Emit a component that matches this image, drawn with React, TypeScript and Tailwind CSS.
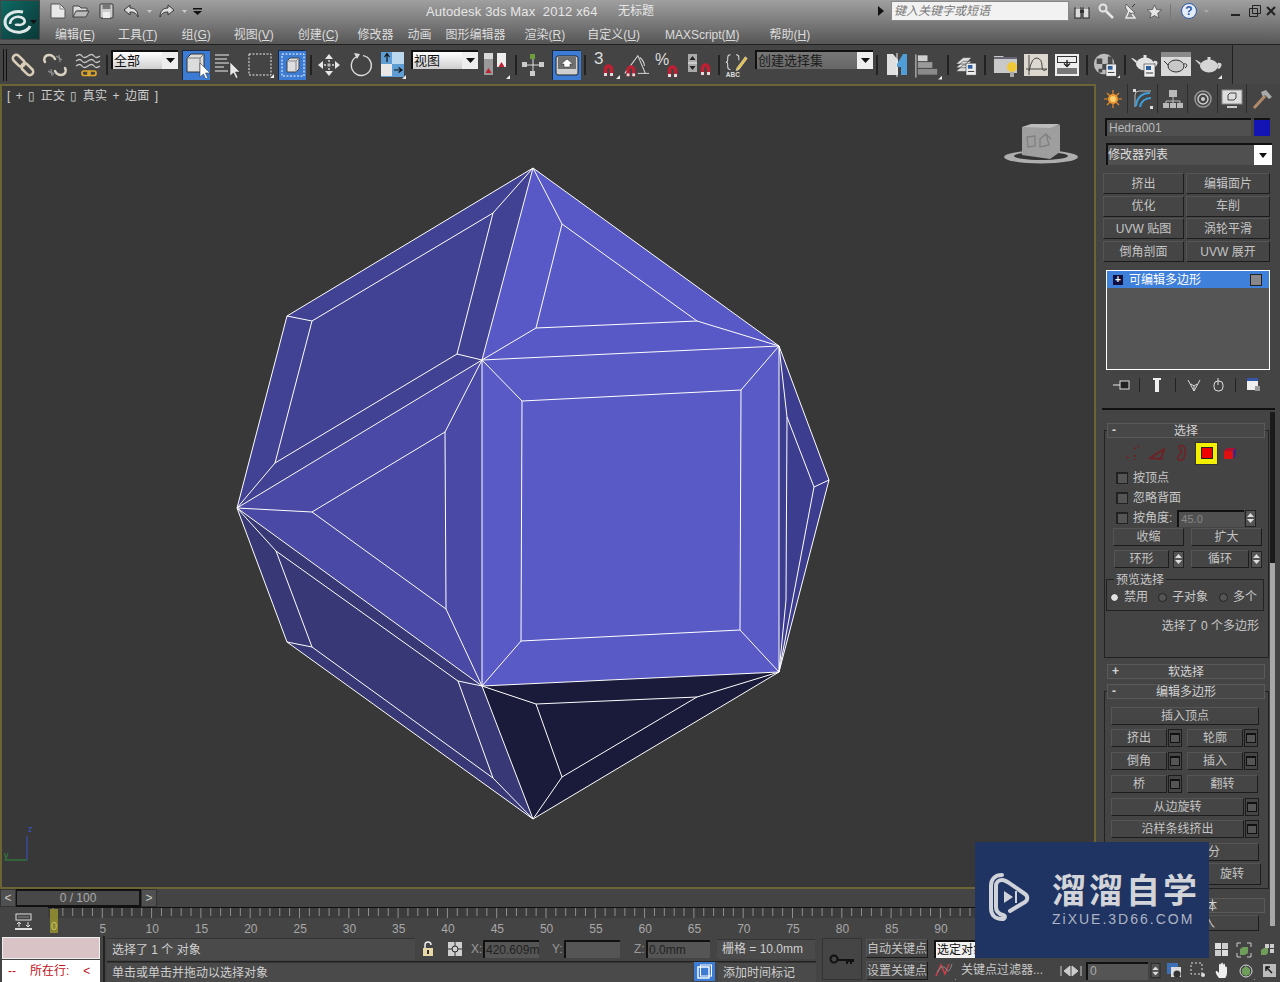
import React from "react";

type P = { children?: React.ReactNode };
const Svg = ({ w, h, children, className }: { w: number; h: number; children?: React.ReactNode; className?: string }) => (
  <svg width={w} height={h} viewBox={`0 0 ${w} ${h}`} className={className} fill="none">{children}</svg>
);
const Corner = ({ x, y }: { x: number; y: number }) => <path d={`M${x} ${y}h4v-4z`} fill="#eee" />;

const A: [number, number] = [533, 168], E: [number, number] = [779, 346], F: [number, number] = [779, 672], B: [number, number] = [533, 819];
const D: [number, number] = [482, 686], C: [number, number] = [482, 360], L: [number, number] = [237, 508], R: [number, number] = [829, 480];
const G1: [number, number] = [287, 316], G2: [number, number] = [287, 642];
const T1: [number, number] = [562, 224], T2: [number, number] = [536, 328], T3: [number, number] = [697, 321];
const lines: [number, number][][] = [
  [A, E, R, F, B, G2, L, G1, A],
  [C, E, F, D, C],
  [[522, 401], [741, 390], [740, 630], [521, 641], [522, 401]],
  [C, [522, 401]], [E, [741, 390]], [F, [740, 630]], [D, [521, 641]],
  [A, C], [A, T1, T2, T3, T1], [T3, E], [T2, C],
  [L, C], [L, D], [C, [445, 432], [446, 609], D], [[445, 432], [312, 512], [446, 609]], [L, [312, 512]],
  [A, [493, 213], [312, 321], [275, 463], [457, 354], [493, 213]], [C, [457, 354]], [L, [275, 463]], [G1, [312, 321]],
  [L, [276, 551], [458, 681], [493, 778], [312, 647], [276, 551]], [D, [458, 681]], [B, [493, 778]], [G2, [312, 647]], [D, B],
  [D, [536, 704], [697, 697], F], [[536, 704], [562, 777], [697, 697]], [[562, 777], B],
  [E, [787, 417], [814, 487], R], [[814, 487], F], [[787, 417], [786, 600], F],
];
const pts = (a: [number, number][]) => a.map((p) => p.join(",")).join(" ");

const Mesh = () => (
  <svg className="absolute inset-0" width="1096" height="805" viewBox="0 84 1096 805" fill="none">
    <polygon points={pts([A, E, C])} fill="#5859c6" />
    <polygon points={pts([C, E, F, D])} fill="#595ac6" />
    <polygon points={pts([L, C, D])} fill="#4a4aa6" />
    <polygon points={pts([A, G1, L, C])} fill="#424294" />
    <polygon points={pts([L, G2, B, D])} fill="#383876" />
    <polygon points={pts([D, F, B])} fill="#1a1a3b" />
    <polygon points={pts([E, R, F])} fill="#3d3d90" />
    {lines.map((l, i) => <polyline key={i} points={pts(l)} stroke="#fff" strokeWidth="1" strokeLinejoin="round" />)}
    {/* nav cube */}
    <ellipse cx="1041" cy="157" rx="37" ry="6.500" fill="#aeaeae" />
    <ellipse cx="1041" cy="156" rx="27" ry="4" fill="#343434" />
    <polygon points="1022,127 1060,125 1060,152 1050,159 1022,155" fill="#9e9e9e" />
    <polygon points="1022,127 1031,124 1060,124 1050,128" fill="#bcbcbc" />
    <path d="M1027 137l8-1 0 10-7 1zM1040 139l6-5 3 11-9 2zM1046 134l5 5" stroke="#808080" strokeWidth="1.300" />
    {/* axis */}
    <path d="M27 860V836" stroke="#3a52c8" strokeWidth="1" />
    <path d="M5 860H27" stroke="#2f8f3a" strokeWidth="1" />
    <text x="28" y="832" fill="#3c56c8" fontSize="9">z</text>
    <text x="4" y="858" fill="#2f8f3a" fontSize="9">y</text>
  </svg>
);

/* ---- toolbar icons ---- */
const Link = () => (
  <Svg w={28} h={28}>
    <g stroke="#d9cdb8" strokeWidth="2.500" transform="rotate(45 14 14)">
      <rect x="1" y="10.500" width="14" height="7" rx="3.500" />
      <rect x="13" y="10.500" width="14" height="7" rx="3.500" />
    </g>
  </Svg>
);
const Unlink = () => (
  <Svg w={28} h={28}>
    <path d="M4 11c-2-3 0-7 4-7s5 2 6 4M24 17c2 3 0 7-4 7s-5-2-6-4" stroke="#d9d2c2" strokeWidth="2.500" strokeLinecap="round" />
    <path d="M15 5l6 4M18 4l1 7M7 20l6 3M10 18l1 7" stroke="#888" strokeWidth="1.400" />
  </Svg>
);
const Wave = () => (
  <Svg w={28} h={28}>
    <path d="M2 5q4-3 6 0t6 0 6 0 6 0M2 10q4-3 6 0t6 0 6 0 6 0M2 15q4-3 6 0t6 0 6 0 6 0" stroke="#c8c8c8" strokeWidth="1.300" />
    <rect x="8" y="20" width="8" height="4.500" rx="2" stroke="#e0a82a" strokeWidth="1.700" />
    <rect x="14" y="20" width="8" height="4.500" rx="2" stroke="#e0a82a" strokeWidth="1.700" />
  </Svg>
);
const BlueBtn = ({ children, w }: P & { w: string }) => (
  <div className={`h-[30px] ${w} bg-[#3d7cd4] border-l border-t border-[#1c2a40] flex items-center justify-center shrink-0`}>{children}</div>
);
const Arrow = ({ x, y, c = "#fff" }: { x: number; y: number; c?: string }) => (
  <path d={`M${x} ${y}v14l3.500-3 2.500 5.500 2-1-2.500-5.500h4.500z`} fill={c} stroke="#222" strokeWidth=".5" />
);
const SelObj = () => (
  <Svg w={26} h={26}>
    <path d="M3 6l4-4h13v14l-4 4H3z" fill="#dcdcdc" stroke="#333" />
    <path d="M3 6h13v14M16 6l4-4" stroke="#777" />
    <Arrow x={16} y={11} />
  </Svg>
);
const SelName = () => (
  <Svg w={30} h={30}>
    <path d="M2 5h14M2 9h12M2 13h14M2 17h9M2 21h13" stroke="#eee" strokeWidth="1.200" />
    <Arrow x={17} y={12} c="#e6e6e6" />
  </Svg>
);
const RectSel = () => (
  <Svg w={28} h={28}>
    <rect x="3" y="3" width="22" height="21" stroke="#eee" strokeDasharray="2 1.500" />
    <Corner x={24} y={27} />
  </Svg>
);
const Cross = () => (
  <Svg w={26} h={26}>
    <rect x="2" y="2" width="22" height="22" stroke="#fff" strokeDasharray="2 1.500" />
    <path d="M7 9l3-3h9v11l-3 3H7z" fill="#dedede" stroke="#444" />
    <path d="M7 9h9v11M16 9l3-3" stroke="#888" />
  </Svg>
);
const Move = () => (
  <Svg w={26} h={26}>
    <path d="M13 2l4 5h-8zM13 24l4-5H9zM2 13l5-4v8zM24 13l-5-4v8z" fill="#e6e6e6" />
    <rect x="11.500" y="11.500" width="3" height="3" fill="#bbb" />
    <path d="M13 8v2M13 16v2M8 13h2M16 13h2" stroke="#ddd" strokeWidth="1.400" />
  </Svg>
);
const Rotate = () => (
  <Svg w={26} h={26}>
    <path d="M8 5a10 10 0 1 0 7-1.400" stroke="#dcdcdc" strokeWidth="1.400" />
    <path d="M6 1l6 1-3 5z" fill="#dcdcdc" />
  </Svg>
);
const Scale = () => (
  <Svg w={26} h={28}>
    <rect x="1" y="1" width="23" height="25" fill="#5f9ed4" />
    <rect x="1" y="13" width="11" height="12" fill="#e8e8e8" />
    <rect x="12" y="1" width="12" height="12" fill="#bcd8ee" />
    <path d="M7 11V3M4.500 6L7 2.500 9.500 6M14 19h8M18.500 16.500L22 19l-3.500 2.500" stroke="#111" strokeWidth="1.200" />
    <Corner x={22} y={28} />
  </Svg>
);
const Pivot = () => (
  <Svg w={28} h={28}>
    <rect x="2" y="2" width="9" height="22" fill="#9a9a9a" />
    <path d="M2 2h9v6H2z" fill="#d8d8d8" />
    <path d="M6.500 17l3 5h-6z" fill="#c02030" />
    <rect x="15" y="2" width="9" height="14" fill="#eee" />
    <path d="M19.500 11l3 5h-6z" fill="#c02030" />
    <Corner x={24} y={28} />
  </Svg>
);
const Center = () => (
  <Svg w={26} h={26}>
    <path d="M13 5v16M4 13h18" stroke="#ddd" />
    <rect x="10" y="2" width="5" height="5" fill="#6c9c3c" />
    <rect x="2" y="10" width="5" height="5" fill="#ccc" />
    <rect x="19" y="10" width="5" height="5" fill="#ccc" />
    <rect x="10" y="19" width="5" height="5" fill="#ccc" />
  </Svg>
);
const Manip = () => (
  <Svg w={26} h={26}>
    <rect x="2" y="4" width="22" height="19" rx="2" fill="#cfcfcf" stroke="#222" />
    <rect x="4" y="5" width="18" height="12" fill="#707070" />
    <path d="M13 7l6 5h-3v3h-6v-3H7z" fill="#fff" stroke="#222" strokeWidth=".5" />
  </Svg>
);
const Mag = ({ x, y }: { x: number; y: number }) => (
  <g>
    <path d={`M${x} ${y + 12}V${y + 5}a4.500 4.500 0 0 1 9 0v7h-3V${y + 5}a1.500 1.500 0 0 0-3 0v7z`} fill="#c41e32" stroke="#c41e32" strokeWidth=".4" />
    <rect x={x} y={y + 9} width="3" height="3" fill="#ddd" />
    <rect x={x + 6} y={y + 9} width="3" height="3" fill="#ddd" />
  </g>
);
const Snap3 = () => (
  <Svg w={30} h={30}>
    <text x="3" y="14" fill="#ddd" fontSize="17">3</text>
    <Mag x={13} y={14} />
    <Corner x={25} y={29} />
  </Svg>
);
const AngleSnap = () => (
  <Svg w={30} h={30}>
    <path d="M3 24L17 5l8 19M19 7a12 12 0 0 1 5 9" stroke="#ddd" strokeWidth="1.100" />
    <path d="M17 24h12" stroke="#ddd" />
    <Mag x={5} y={15} />
  </Svg>
);
const PctSnap = () => (
  <Svg w={30} h={30}>
    <text x="2" y="15" fill="#ddd" fontSize="16">%</text>
    <Mag x={15} y={15} />
  </Svg>
);
const SpinSnap = () => (
  <Svg w={28} h={28}>
    <rect x="2" y="3" width="9" height="18" fill="#aaa" />
    <path d="M6.500 5l3 4h-6zM6.500 19l3-4h-6z" fill="#222" />
    <path d="M2 12h9" stroke="#eee" />
    <Mag x={15} y={12} />
  </Svg>
);
const Abc = () => (
  <Svg w={28} h={28}>
    <path d="M7 3q-3 0-3 3v3q0 2-2 2 2 0 2 2v3q0 3 3 3M13 3q3 0 3 3v3" stroke="#ddd" strokeWidth="1.100" />
    <path d="M23 5l-9 12-1 3 3-1 9-12z" fill="#e6c040" stroke="#eee" strokeWidth=".6" />
    <text x="2" y="27" fill="#ddd" fontSize="7" fontWeight="700">ABC</text>
  </Svg>
);
const Mirror = () => (
  <Svg w={28} h={28}>
    <path d="M4 3h6l5 6v15H4z" fill="#e0e0e0" />
    <path d="M14 2v24" stroke="#eee" />
    <path d="M24 3h-4l-6 10v3h4v8h6z" fill="#4f9ed8" />
  </Svg>
);
const Align = () => (
  <Svg w={30} h={30}>
    <path d="M3 4v24" stroke="#ddd" />
    <rect x="5" y="5" width="10" height="6" fill="#cfcfcf" />
    <rect x="5" y="12" width="15" height="6" fill="#9a9a9a" />
    <rect x="5" y="19" width="20" height="6" fill="#8a8a8a" />
    <Corner x={26} y={30} />
  </Svg>
);
const DocMini = ({ x, y }: { x: number; y: number }) => (
  <g>
    <rect x={x} y={y} width="11" height="13" fill="#eee" stroke="#333" strokeWidth=".6" />
    <rect x={x + 2} y={y + 2} width="5" height="4" fill="#2d5f9c" />
    <path d={`M${x + 2} ${y + 9}h7`} stroke="#333" />
  </g>
);
const Layers = () => (
  <Svg w={26} h={26}>
    <path d="M2 12l8-7h9l-6 7zM2 16l8-7h9l-6 7zM2 20l8-7h9l-6 7z" fill="#ddd" stroke="#333" strokeWidth=".6" />
    <DocMini x={13} y={11} />
  </Svg>
);
const Scene = () => (
  <Svg w={28} h={28}>
    <path d="M2 5h9l2 2h12v15H2z" fill="#c9c9c9" />
    <path d="M2 7h23" stroke="#667" strokeWidth="2" />
    <circle cx="20" cy="16" r="5" fill="#f0c838" />
    <rect x="18" y="21" width="4" height="5" fill="#aaa" />
  </Svg>
);
const CurveEd = () => (
  <Svg w={26} h={26}>
    <rect x="1" y="2" width="24" height="22" fill="#dcd8cf" />
    <path d="M6 3v20M3 17h21M6 19q3-14 8-13t5 8 5 3" stroke="#444" strokeWidth="1" />
  </Svg>
);
const Schem = () => (
  <Svg w={26} h={26}>
    <rect x="1" y="2" width="24" height="22" fill="#eee" />
    <rect x="3" y="4" width="20" height="7" fill="#333" />
    <rect x="4" y="5" width="18" height="5" fill="#eee" />
    <rect x="3" y="16" width="20" height="6" fill="#777" />
    <path d="M13 8v6M10 11.500l3 3 3-3" stroke="#222" strokeWidth="1.400" />
  </Svg>
);
const Material = () => (
  <Svg w={30} h={30}>
    <circle cx="13" cy="14" r="11" fill="#bdbdbd" />
    <path d="M5 8h6v6H5zM11 14h6v6h-6zM17 6h5v8h-5zM7 19h4v4H7z" fill="#4a4a4a" />
    <DocMini x={15} y={14} />
    <Corner x={27} y={29} />
  </Svg>
);
const Pot = ({ y = 0, fill = "#e2e2e2" }: { y?: number; fill?: string }) => (
  <g transform={`translate(0 ${y})`}>
    <ellipse cx="15" cy="12" rx="9" ry="6.500" fill={fill} />
    <path d="M6 11L1 6c3 0 4 2 6 3zM24 9c4-1 5 3 1 6l-2-1c2-2 2-3 0-3z" fill={fill} />
    <rect x="13.500" y="3" width="3" height="3" fill={fill} />
  </g>
);
const RenderSetup = () => (
  <Svg w={30} h={28}>
    <Pot y={1} />
    <DocMini x={14} y={13} />
  </Svg>
);
const RenderFrame = () => (
  <Svg w={30} h={26}>
    <rect x="0" y="0" width="30" height="24" fill="#d9d9d9" />
    <rect x="0" y="0" width="30" height="5" fill="#8a8a8a" />
    <ellipse cx="15" cy="14" rx="8" ry="6" stroke="#333" fill="#c8c8c8" />
    <path d="M7 13L3 9M23 12c3-1 4 2 1 4" stroke="#333" />
  </Svg>
);
const Teapot = () => (
  <Svg w={30} h={28}>
    <Pot y={3} fill="#d5d5d5" />
    <Corner x={24} y={28} />
  </Svg>
);
const Sep = ({ w }: { w: string }) => (
  <div className={`${w} flex justify-center shrink-0`}><div className="w-[2px] h-[20px] bg-[#222]" /></div>
);
const Slot = ({ w, children }: P & { w: string }) => <div className={`${w} h-full flex items-center justify-center shrink-0`}>{children}</div>;
const ToolDrop = ({ w, children, dark }: P & { w: string; dark?: boolean }) => (
  <div className={`${w} h-[19px] shrink-0 self-start mt-[5px] border-l-2 border-t-2 border-[#111] flex items-center ${dark ? "bg-[linear-gradient(#777,#666)]" : "bg-[linear-gradient(#fff,#cfcfcf)]"}`}>
    <span className={`flex-1 pl-[1px] text-[13px] leading-none ${dark ? "text-[#1c1c1c]" : "text-[#111]"}`}>{children}</span>
    <div className="w-[16px] h-full bg-[#eee] flex items-center justify-center">
      <Svg w={9} h={5}><path d="M0 0h9L4.500 5z" fill="#111" /></Svg>
    </div>
  </div>
);

const Toolbar = () => (
  <div className="h-[40px] w-[1280px] bg-[#484848] border-t border-[#222] flex shrink-0">
    <div className="w-[1233px] h-full bg-[#444] border-r border-[#222] flex items-center">
      <div className="w-[9px] h-full pl-[3px] flex items-center gap-[2px]">
        <div className="w-[1px] h-[32px] bg-[#111]" /><div className="w-[1px] h-[32px] bg-[#111]" />
      </div>
      <Slot w="w-[28px]"><Link /></Slot>
      <Slot w="w-[36px]"><Unlink /></Slot>
      <Slot w="w-[30px]"><Wave /></Slot>
      <Sep w="w-[8px]" />
      <ToolDrop w="w-[67px]">全部</ToolDrop>
      <div className="w-[4px]" />
      <BlueBtn w="w-[28px]"><SelObj /></BlueBtn>
      <Slot w="w-[36px]"><SelName /></Slot>
      <Slot w="w-[28px]"><RectSel /></Slot>
      <div className="w-[4px]" />
      <BlueBtn w="w-[28px]"><Cross /></BlueBtn>
      <Sep w="w-[10px]" />
      <Slot w="w-[26px]"><Move /></Slot>
      <Slot w="w-[38px]"><Rotate /></Slot>
      <Slot w="w-[26px]"><Scale /></Slot>
      <div className="w-[5px]" />
      <ToolDrop w="w-[67px]">视图</ToolDrop>
      <Slot w="w-[36px]"><Pivot /></Slot>
      <Sep w="w-[4px]" />
      <Slot w="w-[30px]"><Center /></Slot>
      <div className="w-[4px]" />
      <BlueBtn w="w-[29px]"><Manip /></BlueBtn>
      <Sep w="w-[8px]" />
      <Slot w="w-[33px]"><Snap3 /></Slot>
      <Slot w="w-[28px]"><AngleSnap /></Slot>
      <Slot w="w-[36px]"><PctSnap /></Slot>
      <Slot w="w-[28px]"><SpinSnap /></Slot>
      <Sep w="w-[10px]" />
      <Slot w="w-[26px]"><Abc /></Slot>
      <div className="w-[5px]" />
      <ToolDrop w="w-[118px]" dark>创建选择集</ToolDrop>
      <Sep w="w-[8px]" />
      <Slot w="w-[32px]"><Mirror /></Slot>
      <Slot w="w-[29px]"><Align /></Slot>
      <Sep w="w-[12px]" />
      <Slot w="w-[24px]"><Layers /></Slot>
      <Sep w="w-[14px]" />
      <Slot w="w-[28px]"><Scene /></Slot>
      <Slot w="w-[32px]"><CurveEd /></Slot>
      <Slot w="w-[30px]"><Schem /></Slot>
      <Sep w="w-[10px]" />
      <Slot w="w-[28px]"><Material /></Slot>
      <Sep w="w-[10px]" />
      <Slot w="w-[30px]"><RenderSetup /></Slot>
      <Slot w="w-[32px]"><RenderFrame /></Slot>
      <Slot w="w-[34px]"><Teapot /></Slot>
    </div>
  </div>
);

const Menu = ({ t, k, ml }: { t: string; k?: string; ml: string }) => (
  <span className={`${ml} text-[12px] leading-none text-[#dcdcdc] whitespace-nowrap`}>
    {t}{k && <>(<u>{k}</u>)</>}
  </span>
);

const QuickIcons = () => (
  <>
    <Svg w={16} h={16} className="ml-[10px]"><path d="M1 1h9l5 5v9H1z" fill="#e8e8e8" stroke="#555" /><path d="M10 1v5h5" stroke="#888" /></Svg>
    <Svg w={18} h={16} className="ml-[6px]"><path d="M1 3h6l2 2h6v3H5l-2 6H1z" fill="#ddd" stroke="#444" /><path d="M4 8h13l-3 6H1z" fill="#bbb" stroke="#444" /></Svg>
    <Svg w={15} h={16} className="ml-[9px]"><rect x="1" y="1" width="13" height="14" rx="1" fill="#ccc" stroke="#333" /><rect x="3.500" y="1" width="8" height="5" fill="#777" /><rect x="4" y="9" width="7" height="6" fill="#eee" /></Svg>
    <Svg w={17} h={14} className="ml-[9px]"><path d="M7 1L1 6l6 5V8c4 0 6 1 8 5 0-6-3-9-8-9z" fill="#ddd" stroke="#333" /></Svg>
    <Svg w={5} h={3} className="ml-[7px]"><path d="M0 0h5L2.500 3z" fill="#ccc" /></Svg>
    <Svg w={17} h={14} className="ml-[6px]"><path d="M10 1l6 5-6 5V8C6 8 4 9 2 13c0-6 3-9 8-9z" fill="#ddd" stroke="#333" /></Svg>
    <Svg w={5} h={3} className="ml-[7px]"><path d="M0 0h5L2.500 3z" fill="#ccc" /></Svg>
    <Svg w={9} h={7} className="ml-[6px]"><path d="M0 0h9v1.500H0zM0 3h9L4.500 7z" fill="#111" /></Svg>
  </>
);

const TopRight = () => (
  <>
    <Svg w={7} h={10} className="ml-[-1px]"><path d="M0 0l6 5-6 5z" fill="#111" /></Svg>
    <div className="ml-[6px] w-[178px] h-[20px] bg-[#f2f2f2] border border-[#888] flex items-center pl-[2px] text-[12px] italic text-[#777] leading-none">键入关键字或短语</div>
    <Svg w={16} h={15} className="ml-[5px]"><rect x="1" y="4" width="6" height="10" fill="#ddd" stroke="#222" /><rect x="9" y="4" width="6" height="10" fill="#ddd" stroke="#222" /><rect x="2" y="1" width="4" height="4" fill="#999" /><rect x="10" y="1" width="4" height="4" fill="#999" /><rect x="6" y="6" width="4" height="3" fill="#333" /></Svg>
    <Svg w={16} h={16} className="ml-[8px]"><circle cx="5" cy="5" r="3.500" stroke="#e6e6e6" strokeWidth="2" /><path d="M8 8l7 7" stroke="#e6e6e6" strokeWidth="2.500" /></Svg>
    <Svg w={15} h={16} className="ml-[9px]"><path d="M3 1a7 7 0 0 0 9 9z" fill="#e6e6e6" stroke="#333" strokeWidth=".6" /><path d="M6 8l-3 7h9l-3-4" stroke="#e6e6e6" strokeWidth="1.500" /><path d="M9 4l3-3" stroke="#333" /></Svg>
    <Svg w={15} h={14} className="ml-[9px]"><path d="M7.500 1l2 4.500 5 .5-3.800 3.300 1.200 4.700-4.400-2.500L3 14l1.200-4.700L.5 6l5-.5z" fill="#e6e6e6" stroke="#333" strokeWidth=".6" /></Svg>
    <div className="ml-[8px] w-[1px] h-[14px] bg-[#777]" />
    <div className="ml-[10px] w-[16px] h-[16px] rounded-full bg-[#e6ecf6] border border-[#2a5aa8] flex items-center justify-center text-[12px] font-bold text-[#2a5aa8] leading-none">?</div>
    <Svg w={5} h={3} className="ml-[7px]"><path d="M0 0h5L2.500 3z" fill="#aaa" /></Svg>
    <Svg w={11} h={12} className="ml-[21px]"><path d="M1 10h9" stroke="#222" strokeWidth="2" /></Svg>
    <Svg w={12} h={12} className="ml-[8px]"><path d="M3.500.5h8v8h-8zM.5 3.500h8v8h-8z" fill="none" stroke="#222" /></Svg>
    <Svg w={10} h={10} className="ml-[5px]"><path d="M1 1l8 8M9 1l-8 8" stroke="#222" strokeWidth="2" /></Svg>
  </>
);

const Titlebar = () => (
  <div className="h-[44px] w-[1280px] flex shrink-0 bg-[linear-gradient(#a0a0a0,#8a8a8a_30%,#565656)]">
    <div className="w-[40px] h-[40px] bg-[linear-gradient(135deg,#0e6a62,#0d4a48_60%,#0b3a38)] border border-[#444] flex items-center justify-center shrink-0">
      <Svg w={38} h={38}>
        <path d="M22 11C12 9 4 14 4 21s8 11 16 10c5-1 8-3 9-6" stroke="#dfe8e8" strokeWidth="3" />
        <path d="M9 23c0-5 5-8 10-7 5 1 6 5 3 7-3 2-6 0-8 1" stroke="#dfe8e8" strokeWidth="2.500" />
        <circle cx="19" cy="19.500" r="1.500" fill="#0d4a48" />
        <path d="M29 19h7l-3.500 4z" fill="#111" />
      </Svg>
    </div>
    <div className="flex flex-col flex-1">
      <div className="h-[22px] flex items-center">
        <QuickIcons />
        <div className="ml-[224px] w-[170px] pt-[1px] text-[13px] tracking-[.15px] leading-none text-[#e6e6e6] whitespace-pre">Autodesk 3ds Max  2012 x64</div>
        <div className="ml-[22px] text-[12px] leading-none text-[#e6e6e6]">无标题</div>
        <div className="ml-[225px] flex items-center"><TopRight /></div>
      </div>
      <div className="h-[22px] pt-[3px] flex items-center">
        <Menu ml="ml-[15px]" t="编辑" k="E" />
        <Menu ml="ml-[23px]" t="工具" k="T" />
        <Menu ml="ml-[24px]" t="组" k="G" />
        <Menu ml="ml-[23px]" t="视图" k="V" />
        <Menu ml="ml-[24px]" t="创建" k="C" />
        <Menu ml="ml-[19px]" t="修改器" />
        <Menu ml="ml-[14px]" t="动画" />
        <Menu ml="ml-[14px]" t="图形编辑器" />
        <Menu ml="ml-[19px]" t="渲染" k="R" />
        <Menu ml="ml-[22px]" t="自定义" k="U" />
        <Menu ml="ml-[25px]" t="MAXScript" k="M" />
        <Menu ml="ml-[30px]" t="帮助" k="H" />
      </div>
    </div>
  </div>
);

/* ---- side panel ---- */
const Btn = ({ className, children }: P & { className: string }) => (
  <div className={`${className} shrink-0 bg-[#454545] border border-t-[#555] border-l-[#555] border-b-[#1c1c1c] border-r-[#1c1c1c] flex items-center justify-center text-[12px] leading-none text-[#c4c4c4] whitespace-nowrap`}>{children}</div>
);
const Opt = () => (
  <div className="w-[14px] h-[18px] shrink-0 border border-[#1c1c1c] bg-[#454545] flex items-center justify-center">
    <div className="w-[10px] h-[10px] border border-[#111] border-t-2 bg-[#555]" />
  </div>
);
const BtnOpt = ({ w, h = "h-[18px]", children }: P & { w: string; h?: string }) => (
  <div className={`flex ${h} gap-[1px]`}>
    <Btn className={`${w} h-full`}>{children}</Btn>
    <Opt />
  </div>
);
const RollHead = ({ sign, children, className }: P & { sign: string; className: string }) => (
  <div className={`${className} w-[158px] h-[15px] shrink-0 bg-[#474747] border border-[#5a5a5a] relative flex items-center justify-center text-[12px] leading-none text-[#d4d4d4]`}>
    <span className="absolute left-[4px] top-[0px] text-[12px] font-bold">{sign}</span>
    {children}
  </div>
);
const Check = ({ children, h }: P & { h: string }) => (
  <div className={`${h} flex items-center pl-[11px] text-[12px] leading-none text-[#c8c8c8] whitespace-nowrap`}>
    <div className="w-[12px] h-[12px] border border-[#222] border-t-2 border-l-2 bg-[#555] mr-[5px]" />
    {children}
  </div>
);
const Spin = () => (
  <div className="w-[11px] h-[17px] border border-[#222] bg-[#555] flex flex-col items-center justify-center gap-[2px]">
    <Svg w={7} h={4}><path d="M0 4h7L3.500 0z" fill="#ddd" /></Svg>
    <Svg w={7} h={4}><path d="M0 0h7L3.500 4z" fill="#ddd" /></Svg>
  </div>
);
const Radio = ({ on, children }: P & { on?: boolean }) => (
  <div className="flex items-center gap-[5px] text-[12px] leading-none text-[#c8c8c8] whitespace-nowrap">
    <div className={`w-[9px] h-[9px] rounded-full border border-[#222] ${on ? "bg-[#e0e0e0]" : "bg-[#555]"}`} />
    {children}
  </div>
);

const Tabs = () => (
  <div className="h-[29px] flex items-center shrink-0">
    <div className="w-[29px] h-full flex items-center justify-center ml-[2px] border-r border-[#2c2c2c]">
      <Svg w={18} h={18}><circle cx="9" cy="9" r="5" fill="#f2a030" /><path d="M9 0v18M0 9h18M3 3l12 12M15 3L3 15" stroke="#e88a28" strokeWidth="1.200" /><circle cx="9" cy="9" r="3" fill="#fbd070" /></Svg>
    </div>
    <div className="w-[30px] h-full flex items-center justify-center border-r border-[#2c2c2c]">
      <Svg w={20} h={20}><path d="M2 18V6Q2 2 6 2h12" stroke="#bbb" /><path d="M3 17C4 8 9 4 17 4M7 18c1-5 5-9 11-9" stroke="#3f9ed8" strokeWidth="2.200" /><rect x="0" y="0" width="3" height="3" fill="#ddd" /><rect x="17" y="17" width="3" height="3" fill="#ddd" /></Svg>
    </div>
    <div className="w-[30px] h-full flex items-center justify-center border-r border-[#2c2c2c]">
      <Svg w={20} h={20}><rect x="6" y="1" width="8" height="7" fill="#b9b9b9" /><path d="M10 8v4M3 14v-2h14v2M10 12v2" stroke="#bbb" /><rect x="0" y="14" width="6" height="5" fill="#b9b9b9" /><rect x="7" y="14" width="6" height="5" fill="#b9b9b9" /><rect x="14" y="14" width="6" height="5" fill="#b9b9b9" /></Svg>
    </div>
    <div className="w-[30px] h-full flex items-center justify-center border-r border-[#2c2c2c]">
      <Svg w={20} h={20}><circle cx="10" cy="10" r="8" stroke="#999" strokeWidth="1.500" /><circle cx="10" cy="10" r="5" stroke="#ccc" strokeWidth="1.500" /><circle cx="10" cy="10" r="2" fill="#ccc" /></Svg>
    </div>
    <div className="w-[29px] h-full flex items-center justify-center border-r border-[#2c2c2c]">
      <Svg w={22} h={20}><rect x="1" y="1" width="20" height="14" fill="#ddd" stroke="#888" /><path d="M7 6l2-2h6v5l-2 2H7z" stroke="#444" /><path d="M6 18h10" stroke="#ccc" strokeWidth="2" /></Svg>
    </div>
    <div className="w-[29px] h-full flex items-center justify-center">
      <Svg w={22} h={22}><path d="M3 20L14 8" stroke="#b08a68" strokeWidth="3" /><path d="M10 4l5-2 6 7-3 2-4-4-2 2z" fill="#aaa" /></Svg>
    </div>
  </div>
);

const StackIcons = () => (
  <div className="h-[18px] mt-[6px] flex items-center text-[#ddd] shrink-0">
    <Svg w={18} h={12} className="ml-[16px]"><path d="M0 6h7" stroke="#eee" /><rect x="7" y="2" width="9" height="8" fill="#222" stroke="#ddd" /></Svg>
    <div className="ml-[8px] w-[1px] h-[14px] bg-[#222]" />
    <Svg w={8} h={14} className="ml-[13px]"><path d="M0 0h8v2H6v12H2V2H0z" fill="#eee" /></Svg>
    <div className="ml-[14px] w-[1px] h-[14px] bg-[#222]" />
    <Svg w={14} h={13} className="ml-[11px]"><path d="M1 1l6 11 6-11M7 12V7M4 5l3 2 3-2" stroke="#ddd" /></Svg>
    <Svg w={11} h={14} className="ml-[12px]"><rect x="1" y="3" width="9" height="10" rx="4" stroke="#ddd" /><path d="M5 0v7" stroke="#ddd" /></Svg>
    <div className="ml-[11px] w-[1px] h-[14px] bg-[#222]" />
    <Svg w={15} h={14} className="ml-[10px]"><rect x="1" y="0" width="11" height="12" fill="#eee" /><rect x="1" y="0" width="11" height="3" fill="#3456a8" /><path d="M9 8h5v5H9z" fill="#999" /></Svg>
  </div>
);

const SelIcons = () => (
  <div className="h-[22px] mt-[4px] flex items-center">
    <Svg w={18} h={16} className="ml-[21px]"><path d="M1 13l3-3M8 4l5-3M9 10v5" stroke="#6e2226" strokeWidth="2" strokeDasharray="2 2" /></Svg>
    <Svg w={16} h={14} className="ml-[5px]"><path d="M1 12l14-9-3 10z" stroke="#6e2226" strokeWidth="2" /></Svg>
    <Svg w={10} h={18} className="ml-[12px]"><path d="M2 2c5-2 7 2 6 8s-3 7-6 6 0-5 2-7-2-4-2-7z" stroke="#6e2226" strokeWidth="1.600" /></Svg>
    <div className="ml-[8px] w-[23px] h-[23px] bg-[#f4f000] flex items-center justify-center border border-[#333] shrink-0">
      <div className="w-[12px] h-[12px] bg-[#f00000] border border-[#222]" />
    </div>
    <Svg w={14} h={14} className="ml-[5px]"><path d="M1 5h9v8H1z" fill="#e01010" /><path d="M1 5l3-3h9l-3 3z" fill="#b01030" /><path d="M10 5l3-3v8l-3 3z" fill="#3a2a80" /></Svg>
  </div>
);

const SidePanel = () => (
  <div className="w-[183px] h-full bg-[#444] flex flex-col overflow-hidden shrink-0">
    <Tabs />
    <div className="mt-[5px] ml-[8px] flex items-center shrink-0">
      <div className="w-[146px] h-[18px] bg-[#505050] border-l-2 border-t-2 border-[#111] flex items-center pl-[2px] text-[12px] leading-none text-[#bbb]">Hedra001</div>
      <div className="ml-[3px] w-[16px] h-[18px] bg-[#1414b4] border-t-2 border-[#111]" />
    </div>
    <div className="mt-[7px] ml-[9px] w-[166px] h-[22px] bg-[#505050] border-l-2 border-t-2 border-[#111] flex items-center shrink-0">
      <span className="flex-1 text-[12px] leading-none text-[#ddd]">修改器列表</span>
      <div className="w-[18px] h-full bg-white flex items-center justify-center"><Svg w={8} h={5}><path d="M0 0h8L4 5z" fill="#111" /></Svg></div>
    </div>
    <div className="mt-[8px] ml-[6px] grid grid-cols-[81px_84px] gap-x-[2px] gap-y-[1.700px] w-[167px] shrink-0">
      <Btn className="h-[21px]">挤出</Btn><Btn className="h-[21px]">编辑面片</Btn>
      <Btn className="h-[21px]">优化</Btn><Btn className="h-[21px]">车削</Btn>
      <Btn className="h-[21px]">UVW 贴图</Btn><Btn className="h-[21px]">涡轮平滑</Btn>
      <Btn className="h-[21px]">倒角剖面</Btn><Btn className="h-[21px]">UVW 展开</Btn>
    </div>
    <div className="mt-[8px] ml-[9px] w-[164px] h-[100px] bg-[#555] border border-white shrink-0">
      <div className="h-[17px] bg-[#3f80da] flex items-center text-[12px] leading-none text-white">
        <div className="ml-[6px] w-[10px] h-[10px] bg-[#101040] flex items-center justify-center text-[10px] font-bold">+</div>
        <span className="ml-[6px] flex-1">可编辑多边形</span>
        <div className="mr-[7px] w-[12px] h-[12px] bg-[#888] border border-[#222]" />
      </div>
    </div>
    <StackIcons />
    <div className="mt-[14px] ml-[5px] w-[173px] h-[2px] bg-[#111] shrink-0" />
    <div className="flex flex-1 min-h-0 mt-[2px] overflow-hidden">
      <div className="w-[174px] flex flex-col pt-[18px]">
        <div className="ml-[7px] w-[165px] h-[228px] border border-[#222] shrink-0">
          <RollHead className="mt-[-8px] ml-[2px]" sign="-">选择</RollHead>
          <SelIcons />
          <div className="mt-[4px]">
            <Check h="h-[20px]">按顶点</Check>
            <Check h="h-[20px]">忽略背面</Check>
            <div className="flex items-center h-[20px]">
              <Check h="h-[20px]">按角度:</Check>
              <div className="ml-[5px] w-[67px] h-[17px] bg-[#505050] border-l-2 border-t-2 border-[#111] text-[11px] pl-[2px] leading-[15px] text-[#888]">45.0</div>
              <div className="ml-[1px]"><Spin /></div>
            </div>
          </div>
          <div className="flex ml-[8px] gap-[7px]">
            <Btn className="w-[71px] h-[18px]">收缩</Btn>
            <Btn className="w-[71px] h-[18px]">扩大</Btn>
          </div>
          <div className="flex ml-[9px] mt-[4px] items-center">
            <Btn className="w-[55px] h-[18px]">环形</Btn>
            <div className="ml-[4px]"><Spin /></div>
            <Btn className="w-[58px] h-[18px] ml-[7px]">循环</Btn>
            <div className="ml-[2px]"><Spin /></div>
          </div>
          <div className="mt-[11px] ml-[1px] w-[158px] h-[32px] border border-[#222]">
            <div className="mt-[-7px] ml-[7px] w-fit px-[2px] bg-[#444] text-[12px] leading-[14px] text-[#c8c8c8]">预览选择</div>
            <div className="mt-[4px] flex items-center pl-[3px]">
              <Radio on>禁用</Radio>
              <div className="ml-[10px]"><Radio>子对象</Radio></div>
              <div className="ml-[11px]"><Radio>多个</Radio></div>
            </div>
          </div>
          <div className="mt-[8px] pr-[9px] text-right text-[12px] leading-[14px] text-[#c8c8c8]">选择了 0 个多边形</div>
        </div>
        <RollHead className="mt-[6px] ml-[10px]" sign="+">软选择</RollHead>
        <div className="ml-[7px] w-[165px] h-[198px] mt-[12px] border border-[#222] shrink-0">
          <RollHead className="mt-[-8px] ml-[2px]" sign="-">编辑多边形</RollHead>
          <div className="ml-[6px] flex flex-col">
            <Btn className="w-[148px] h-[18px] mt-[8px]">插入顶点</Btn>
            <div className="flex mt-[4px] gap-[5px]"><BtnOpt w="w-[56px]">挤出</BtnOpt><BtnOpt w="w-[56px]">轮廓</BtnOpt></div>
            <div className="flex mt-[5px] gap-[5px]"><BtnOpt w="w-[56px]">倒角</BtnOpt><BtnOpt w="w-[56px]">插入</BtnOpt></div>
            <div className="flex mt-[5px] gap-[5px]"><BtnOpt w="w-[56px]">桥</BtnOpt><Btn className="w-[71px] h-[18px]">翻转</Btn></div>
            <div className="mt-[5px]"><BtnOpt w="w-[133px]">从边旋转</BtnOpt></div>
            <div className="mt-[4px]"><BtnOpt w="w-[133px]">沿样条线挤出</BtnOpt></div>
            <div className="w-[148px] h-[18px] mt-[5px] shrink-0 bg-[#454545] border border-t-[#555] border-l-[#555] border-b-[#1c1c1c] border-r-[#1c1c1c] flex items-center justify-end pr-[38px] text-[12px] leading-none text-[#c4c4c4]">分</div>
            <div className="flex mt-[2px] gap-[3px]"><Btn className="w-[89px] h-[22px]">{""}</Btn><Btn className="w-[58px] h-[22px]">旋转</Btn></div>
          </div>
        </div>
        <div className="mt-[9px] ml-[10px] w-[158px] h-[15px] shrink-0 bg-[#474747] border border-[#5a5a5a] flex items-center pl-[97px] text-[12px] leading-none text-[#d4d4d4]">体</div>
        <div className="ml-[14px] w-[148px] h-[16px] mt-[2px] shrink-0 bg-[#454545] border border-t-[#555] border-l-[#555] border-b-[#1c1c1c] border-r-[#1c1c1c] flex items-center pl-[91px] text-[12px] leading-none text-[#c4c4c4]">入</div>
      </div>
      <div className="w-[5px] ml-[-1px] flex flex-col shrink-0 h-[514px]">
        <div className="h-[151px] bg-[#1a1a1a]" />
        <div className="flex-1 bg-[#a8a8a8]" />
      </div>
    </div>
  </div>
);

/* ---- timeline ---- */
const Timeline = () => {
  const nums = [5, 10, 15, 20, 25, 30, 35, 40, 45, 50, 55, 60, 65, 70, 75, 80, 85, 90, 95, 100];
  const ticks = Array.from({ length: 106 }, (_, i) => i);
  return (
    <div className="h-[29px] flex bg-[#444] relative">
      <div className="w-[48px] flex items-start justify-center pt-[6px]">
        <Svg w={18} h={17}><rect x="1" y="1" width="15" height="6" stroke="#ddd" /><path d="M3 4h11" stroke="#888" /><path d="M4 14V9M2 11l2-2 2 2M13 9v5M11 12l2 2 2-2" stroke="#ddd" /><path d="M0 16h17" stroke="#ddd" strokeWidth="2" /></Svg>
      </div>
      <div className="flex-1 relative overflow-hidden">
        <div className="h-[11px] bg-[#3c3c3c] border-t border-[#111]">
          <svg width="1049" height="10" viewBox="0 0 1049 10">
            {ticks.map((i) => <path key={i} d={`M${5 + i * 9.86} 0v${i % 5 === 0 ? 10 : 8}`} stroke="#8f8f8f" strokeWidth="1" />)}
          </svg>
        </div>
        <div className="flex mt-[5px] ml-[30.300px] w-[1100px]">
          {nums.map((n) => <div key={n} className="w-[49.300px] shrink-0 text-center text-[12px] leading-[13px] text-[#a8a8a8]">{n}</div>)}
        </div>
        <div className="absolute left-[2px] top-[2px] w-[8px] h-[24px] bg-[#8a8530] flex items-end justify-center text-[11px] leading-[13px] text-[#c8c46a]">0</div>
      </div>
    </div>
  );
};

const Field = ({ w, children }: P & { w: string }) => (
  <div className={`${w} h-[18px] shrink-0 bg-[#555] border-l-2 border-t-2 border-[#111] flex items-center overflow-hidden pl-[1px] text-[12px] leading-none text-[#222] whitespace-nowrap`}>{children}</div>
);
const Status = ({ w, h, children }: P & { w: string; h: string }) => (
  <div className={`${w} ${h} shrink-0 bg-[#4a4a4a] border-t border-[#333] flex items-center pl-[5px] text-[12px] leading-none text-[#cfcfcf] whitespace-nowrap`}>{children}</div>
);
const Lbl = ({ ml, children }: P & { ml: string }) => (
  <div className={`${ml} w-[12px] shrink-0 text-[12px] leading-none text-[#9a9a9a]`}>{children}</div>
);

const StatusBar = () => (
  <div className="h-[46px] bg-[#444] flex shrink-0">
    <div className="w-[100px] pl-[2px] pt-[1px] flex flex-col gap-[1px]">
      <div className="h-[22px] bg-[#d9c3c6] border border-[#eee]" />
      <div className="h-[22px] bg-white flex items-center pl-[6px] text-[12px] leading-none text-[#c01020] gap-[14px]">
        <span>--</span><span>所在行:</span><span>&lt;</span>
      </div>
    </div>
    <div className="ml-[3px] w-[2px] bg-[#222]" />
    <div className="ml-[2px] w-[709px] flex flex-col">
      <div className="h-[26px] flex items-center">
        <Status w="w-[308px]" h="h-[22px] pt-[1px]">选择了 1 个 对象</Status>
        <Svg w={14} h={16} className="ml-[6px]"><rect x="2" y="7" width="10" height="8" fill="#e8d8a8" /><path d="M4 7V4a3 3 0 0 1 6 0" stroke="#eee" strokeWidth="1.500" /><rect x="6" y="9" width="2" height="4" fill="#333" /></Svg>
        <Svg w={16} h={16} className="ml-[12px]"><rect x="1" y="1" width="14" height="14" fill="#cfcfcf" /><circle cx="8" cy="8" r="3" stroke="#222" /><path d="M8 1v4M8 11v4M1 8h4M11 8h4" stroke="#333" /></Svg>
        <Lbl ml="ml-[8px]">X:</Lbl>
        <Field w="w-[56px]">420.609mm</Field>
        <Lbl ml="ml-[13px]">Y:</Lbl>
        <Field w="w-[56px]">{""}</Field>
        <Lbl ml="ml-[14px]">Z:</Lbl>
        <Field w="w-[64px]">0.0mm</Field>
        <div className="ml-[7px] w-[98px] h-[20px] shrink-0 bg-[#4a4a4a] border-t border-[#333] flex items-center pl-[5px] text-[12px] leading-none text-[#cfcfcf]">栅格 = 10.0mm</div>
      </div>
      <div className="flex flex-1 items-start border-t border-[#222]">
        <Status w="w-[585px]" h="h-[20px] pt-[1px]">单击或单击并拖动以选择对象</Status>
        <div className="ml-[2px] w-[21px] h-[19px] bg-[#3d7cd4] flex items-center justify-center shrink-0">
          <Svg w={15} h={15}><rect x="1" y="3" width="11" height="11" stroke="#fff" strokeWidth="1.400" /><rect x="3.500" y="1" width="11" height="11" stroke="#fff" /></Svg>
        </div>
        <Status w="w-[98px] ml-[3px]" h="h-[20px] pt-[1px]">添加时间标记</Status>
      </div>
    </div>
    <div className="ml-[6px] mt-[2px] w-[40px] h-[42px] bg-[#454545] border border-[#333] flex items-center justify-center">
      <Svg w={26} h={12}><circle cx="5" cy="6" r="3.500" stroke="#111" strokeWidth="2" /><path d="M9 6h16v3h-2v2h-2V9h-2v2h-2V8H9z" fill="#111" /></Svg>
    </div>
    <div className="ml-[4px] mt-[3px] w-[62px] flex flex-col gap-[3px]">
      <Btn className="h-[19px]">自动关键点</Btn>
      <Btn className="h-[19px]">设置关键点</Btn>
    </div>
    <div className="ml-[6px] mt-[4px] w-[114px] flex flex-col gap-[2px]">
      <div className="h-[18px] bg-[#f2f2f2] border-t-2 border-l-2 border-[#111] pl-[1px] text-[12px] leading-[16px] text-[#111]">选定对象</div>
      <div className="flex h-[21px]">
        <Svg w={22} h={20}><path d="M2 16L7 5l4 9 4-10" stroke="#c9404a" strokeWidth="1.600" /><path d="M3 12q6-9 9-3t6-5" stroke="#888" /><Corner x={21} y={20} /></Svg>
        <div className="ml-[5px] w-[87px] text-[12px] leading-[21px] text-[#c8c8c8] whitespace-nowrap">关键点过滤器...</div>
      </div>
    </div>
    <div className="flex flex-col items-start">
      <div className="h-[23px]" />
      <div className="flex items-center h-[23px]">
        <Svg w={22} h={12} className="ml-[12px]"><path d="M1 1v10M10 1L4 6l6 5zM12 1l6 5-6 5zM21 1v10" fill="#ccc" stroke="#ccc" /></Svg>
        <div className="ml-[4px] w-[62px] h-[18px] bg-[#555] border-l-2 border-t-2 border-[#111] text-[12px] leading-[15px] pl-[2px] text-[#aaa]">0</div>
        <div className="ml-[2px] scale-90"><Spin /></div>
      </div>
    </div>
    <div className="w-[112px] ml-[5px] flex flex-col">
      <div className="h-[23px] pt-[4px] pl-[49px] flex items-center gap-[7px]">
        <Svg w={14} h={14}><rect x="0" y="0" width="6" height="6" fill="#ddd" /><rect x="7" y="0" width="6" height="6" fill="#ccc" /><rect x="0" y="7" width="6" height="6" fill="#ccc" /><rect x="7" y="7" width="6" height="6" fill="#ddd" /></Svg>
        <Svg w={16} h={16}><path d="M1 5V1h4M11 1h4v4M15 11v4h-4M5 15H1v-4" stroke="#ccc" /><path d="M4 7l3-2h5v6l-3 2H4z" fill="#6f9e5a" /></Svg>
        <Svg w={16} h={16}><path d="M6 2h4v4H6zM11 2h4v4h-4zM11 7h4v4h-4z" fill="#ccc" /><path d="M2 8l3-2h4v5l-2 2H2z" fill="#6f9e5a" /></Svg>
      </div>
      <div className="h-[23px] flex items-center gap-[5px]">
        <Svg w={17} h={17}><rect x="1" y="1" width="11" height="11" fill="#3d6fb4" /><rect x="5" y="5" width="10" height="10" fill="#ddd" /><circle cx="11" cy="12" r="3.500" fill="#333" /></Svg>
        <Svg w={17} h={17} className="ml-[2px]"><rect x="1" y="1" width="11" height="11" stroke="#ddd" strokeDasharray="2 2" /><circle cx="13" cy="13" r="2" fill="#ddd" /></Svg>
        <Svg w={18} h={18} className="ml-[2px]"><path d="M5 16c-4-5-4-7-2-7l2 2V3c1-2 2-1 2 0v5V2c1-2 2-1 2 0v6V3c1-2 2-1 2 0v6-4c1-2 2 0 2 1v5c0 3-2 5-2 5z" fill="#eee" /></Svg>
        <Svg w={18} h={18}><circle cx="9" cy="9" r="6" stroke="#ddd" /><path d="M5 7l4-3 4 3v5l-4 2-4-2z" fill="#6f9e5a" /><Corner x={17} y={18} /></Svg>
        <Svg w={16} h={16} className="ml-[2px]"><rect x="1" y="1" width="13" height="13" fill="#bbb" /><path d="M4 4l6 6M4 8V4h4" stroke="#111" strokeWidth="1.400" /></Svg>
      </div>
    </div>
  </div>
);

const Watermark = () => (
  <div className="absolute left-[975px] top-[842px] w-[234px] h-[116px] bg-[#1f3462] flex items-center">
    <Svg w={48} h={50} className="ml-[13px] mt-[-6px]">
      <path d="M14 3C7 3 3 7 3 14v22c0 7 4 11 11 11 3 0 4-3 1-4-4-1-7-3-7-8V14c0-4 3-6 6-6 3 0 6 2 10 5l13 9c3 2 3 6 0 8L22 39" stroke="#cfd2d8" strokeWidth="4" strokeLinecap="round" />
      <path d="M16 19l9 6-9 6z" fill="#cfd2d8" />
      <path d="M28 19v12" stroke="#cfd2d8" strokeWidth="2" />
    </Svg>
    <div className="ml-[16px] flex flex-col">
      <div className="text-[34px] leading-[36px] font-bold tracking-[3px] text-[#d2d4d9] whitespace-nowrap">溜溜自学</div>
      <div className="mt-[2px] text-[14px] leading-[16px] tracking-[2px] text-[#aeb4c4] whitespace-nowrap">ZiXUE.3D66.COM</div>
    </div>
  </div>
);

export default function App() {
  return (
    <div className="relative w-[1280px] h-[982px] overflow-hidden bg-[#444] flex flex-col [font-family:'Liberation_Sans','Noto_Sans_CJK_SC',sans-serif]">
      <Titlebar />
      <Toolbar />
      <div className="flex h-[852px] shrink-0">
        <div className="w-[1097px] flex flex-col">
          <div className="h-[805px] w-[1096px] relative bg-[#383838] border-2 border-[#6b6435] box-border overflow-hidden">
            <div className="absolute left-[-2px] top-[-2px]"><Mesh /></div>
            <div className="relative pl-[5px] pt-[3px] text-[12px] leading-[14px] tracking-[.3px] [word-spacing:1.500px] text-[#cfcfcf] whitespace-pre">[ + ▯ 正交 ▯ 真实 + 边面 ]</div>
          </div>
          <div className="h-[18px] flex items-center">
            <div className="w-[16px] h-[18px] bg-[#505050] border border-[#333] flex items-center justify-center text-[12px] text-[#ccc] leading-none">&lt;</div>
            <div className="w-[125px] h-[18px] bg-[#484848] border-t-2 border-l border-r-2 border-[#111] border-b-2 flex items-center justify-center text-[12px] text-[#aaa] leading-none">0 / 100</div>
            <div className="w-[16px] h-[18px] bg-[#505050] border border-[#333] flex items-center justify-center text-[12px] text-[#ccc] leading-none">&gt;</div>
          </div>
          <Timeline />
        </div>
        <SidePanel />
      </div>
      <StatusBar />
      <Watermark />
    </div>
  );
}
